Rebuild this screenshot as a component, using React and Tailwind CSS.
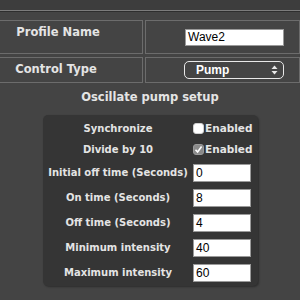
import React from 'react';

const rows = [
    { label: 'Initial off time (Seconds)', value: '0' },
    { label: 'On time (Seconds)', value: '8' },
    { label: 'Off time (Seconds)', value: '4' },
    { label: 'Minimum intensity', value: '40' },
    { label: 'Maximum intensity', value: '60' },
];

const Check = ({ checked }) => (
    <span
        className={
            'w-[11px] h-[11px] rounded-[3px] flex items-center justify-center ' +
            (checked ? 'bg-[#8a8a8a] border border-[#9a9a9a]' : 'bg-white border border-[#cfcfcf]')
        }
    >
        {checked && (
            <svg width="9" height="9" viewBox="0 0 9 9">
                <path d="M1.5 4.8 L3.6 7 L7.6 1.6" stroke="#fff" strokeWidth="1.6" fill="none" />
            </svg>
        )}
    </span>
);

const App = () => {
    return (
        <div className="w-[300px] h-[300px] bg-[#444444] overflow-hidden text-[#e4e4e4] font-['DejaVu_Sans',sans-serif]">
            {/* Top bar */}
            <div className="h-[10px] bg-[#3d3d3d]" />
            <div className="h-[2px] bg-[#7c7c7c] border-b border-[#2e2e2e]" />

            {/* Profile table */}
            <div className="mt-[8px] grid grid-cols-[144px_1fr] gap-x-[2px] gap-y-[3px] ml-[-1px]">
                <div className="h-[34px] border border-[#6c6c6c] flex items-center justify-center font-bold text-[11.5px] pb-[8px] pr-[26px]">
                    Profile Name
                </div>
                <div className="h-[34px] border border-[#6c6c6c] flex items-center pl-[39px]">
                    <div className="w-[99px] h-[17px] bg-white border border-[#9a9a9a] text-black text-[12px] leading-[15px] pl-[2px] font-['Liberation_Sans',sans-serif]">
                        Wave2
                    </div>
                </div>
                <div className="h-[26px] border border-[#6c6c6c] flex items-center justify-center font-bold text-[11.5px] pr-[30px]">
                    Control Type
                </div>
                <div className="h-[26px] border border-[#6c6c6c] flex items-center pl-[38px]">
                    <div className="w-[100px] h-[18px] rounded-[5px] border border-[#e8e8e8] flex items-center justify-between pl-[11px] pr-[5px] text-white font-bold text-[12px] font-['Liberation_Sans',sans-serif]">
                        <span>Pump</span>
                        <svg width="7" height="10" viewBox="0 0 7 10">
                            <path d="M0.5 4 L3.5 0.5 L6.5 4 Z" fill="#e8e8e8" />
                            <path d="M0.5 6 L3.5 9.5 L6.5 6 Z" fill="#e8e8e8" />
                        </svg>
                    </div>
                </div>
            </div>

            {/* Section title */}
            <div className="mt-[6px] text-center font-bold text-[11.5px] leading-[16px]">
                Oscillate pump setup
            </div>

            {/* Setup panel */}
            <div className="mt-[10px] ml-[43px] w-[215px] h-[171px] bg-[#353535] rounded-[5px] shadow-[1px_1px_2px_rgba(0,0,0,0.35)] pt-[3px] text-[10px] font-bold">
                <div className="grid grid-cols-[150px_1fr]">
                    <div className="h-[21px] flex items-center justify-center">Synchronize</div>
                    <div className="h-[21px] flex items-center gap-[1px] text-[10.5px]">
                        <Check checked={false} />
                        <span>Enabled</span>
                    </div>
                    <div className="h-[21px] flex items-center justify-center">Divide by 10</div>
                    <div className="h-[21px] flex items-center gap-[1px] text-[10.5px]">
                        <Check checked={true} />
                        <span>Enabled</span>
                    </div>
                    {rows.map((r) => (
                        <React.Fragment key={r.label}>
                            <div className="h-[25px] flex items-center justify-center">{r.label}</div>
                            <div className="h-[25px] flex items-center">
                                <div className="w-[58px] h-[18px] bg-white border border-[#9a9a9a] text-black text-[12px] font-normal leading-[16px] pl-[2px] font-['Liberation_Sans',sans-serif]">
                                    {r.value}
                                </div>
                            </div>
                        </React.Fragment>
                    ))}
                </div>
            </div>
        </div>
    );
};

export default App;
